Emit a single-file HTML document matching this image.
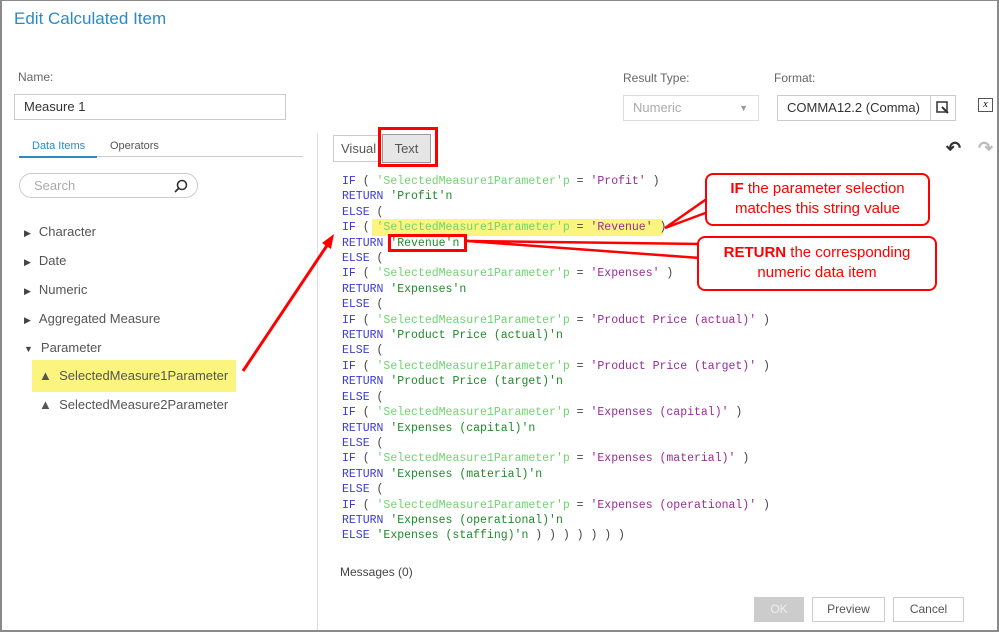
<!DOCTYPE html>
<html><head><meta charset="utf-8"><style>
*{margin:0;padding:0;box-sizing:border-box}
body{width:999px;height:632px;background:#fff;font-family:"Liberation Sans",sans-serif;position:relative;overflow:hidden}
.frame{position:absolute;left:0;top:0;width:999px;height:632px;border:2px solid #8a8a8a;border-top-width:1px}
.a{position:absolute}
.lbl{font-size:12px;color:#666}
.inp{border:1px solid #ccc;background:#fff;font-size:13px;color:#333;padding-left:9px;line-height:24px}
.tree{font-size:13px;color:#555}
.tree div{height:29px;line-height:29px}
.code{font-family:"Liberation Mono",monospace;font-size:11.5px;line-height:15.4px;white-space:pre;color:#444}
.k{color:#3b3bd6}.p{color:#6fd46f}.n{color:#1f8a2a}.s{color:#9a2a9a}
.btn{border:1px solid #ccc;font-size:12px;color:#555;text-align:center;line-height:23px;background:#fff}
.co{border:2.5px solid #f00;border-radius:8px;background:#fff;color:#f00;font-size:15px;text-align:center;line-height:20px}
</style></head><body>
<div class="frame"></div>
<div class="a" style="left:14px;top:9px;font-size:17px;color:#2a8ac6">Edit Calculated Item</div>
<div class="a lbl" style="left:18px;top:70px">Name:</div>
<div class="a inp" style="left:14px;top:94px;width:272px;height:26px">Measure 1</div>
<div class="a lbl" style="left:623px;top:71px">Result Type:</div>
<div class="a inp" style="left:623px;top:95px;width:136px;height:26px;color:#aaa;border-color:#ddd">Numeric<span style="position:absolute;right:10px;font-size:9px;color:#999">▼</span></div>
<div class="a lbl" style="left:774px;top:71px">Format:</div>
<div class="a inp" style="left:777px;top:95px;width:179px;height:26px">COMMA12.2 (Comma)</div>
<div class="a" style="left:930px;top:95px;width:26px;height:26px;border:1px solid #ccc"><svg width="24" height="24"><rect x="6" y="6" width="10" height="10" fill="none" stroke="#333" stroke-width="1.5"/><path d="M11 11 L17 17" stroke="#333" stroke-width="2"/></svg></div>
<div class="a" style="left:978px;top:98px;width:15px;height:14px;border:1px solid #555;font-size:10px;font-style:italic;font-family:'Liberation Serif',serif;text-align:center;line-height:12px">x</div>
<div class="a" style="left:19px;top:140px;width:284px;height:17px;border-bottom:1px solid #ccc"></div>
<div class="a" style="left:19px;top:156px;width:78px;height:2px;background:#2a8ac6"></div>
<div class="a" style="left:32px;top:140px;font-size:11px;color:#2a8ac6">Data Items</div>
<div class="a" style="left:110px;top:140px;font-size:11px;color:#555">Operators</div>
<div class="a" style="left:19px;top:173px;width:179px;height:25px;border:1px solid #ccc;border-radius:13px;font-size:13px;color:#aaa;padding-left:14px;line-height:23px">Search
<svg style="position:absolute;right:8px;top:4px" width="16" height="16"><circle cx="9" cy="7" r="4.5" fill="none" stroke="#333" stroke-width="1.6"/><path d="M6 10 L2 14" stroke="#333" stroke-width="1.8"/></svg></div>
<div class="a tree" style="left:24px;top:217px">
<div><span style="font-size:9px;color:#444;margin-right:8px">▶</span>Character</div>
<div><span style="font-size:9px;color:#444;margin-right:8px">▶</span>Date</div>
<div><span style="font-size:9px;color:#444;margin-right:8px">▶</span>Numeric</div>
<div><span style="font-size:9px;color:#444;margin-right:8px">▶</span>Aggregated Measure</div>
<div><span style="font-size:9px;color:#444;margin-right:8px">▼</span>Parameter</div>
</div>
<div class="a" style="left:32px;top:360px;width:204px;height:32px;background:#fbf57f"></div>
<div class="a tree" style="left:39px;top:368px">▲&nbsp; SelectedMeasure1Parameter</div>
<div class="a tree" style="left:39px;top:397px">▲&nbsp; SelectedMeasure2Parameter</div>
<div class="a" style="left:317px;top:133px;width:1px;height:497px;background:#ddd"></div>
<div class="a" style="left:333px;top:135px;width:48px;height:27px;border:1px solid #ccc;font-size:13px;color:#555;line-height:25px;padding-left:7px">Visual</div>
<div class="a" style="left:382px;top:134px;width:49px;height:29px;border:1px solid #999;background:#e6e6e6;font-size:13px;color:#555;line-height:27px;text-align:center">Text</div>
<div class="a" style="left:378px;top:127px;width:60px;height:40px;border:3px solid #f00"></div>
<div class="a" style="left:946px;top:138px;font-size:18px;font-weight:bold;color:#333">↶</div>
<div class="a" style="left:978px;top:138px;font-size:18px;font-weight:bold;color:#bbb">↷</div>
<div class="a" style="left:372px;top:219px;width:291px;height:17px;background:#fbf57f"></div>
<div class="a code" style="left:342px;top:174px"><span class="k">IF</span> ( <span class="p">'SelectedMeasure1Parameter'p</span> = <span class="s">'Profit'</span> )
<span class="k">RETURN</span> <span class="n">'Profit'n</span>
<span class="k">ELSE</span> (
<span class="k">IF</span> ( <span class="p">'SelectedMeasure1Parameter'p</span> = <span class="s">'Revenue'</span> )
<span class="k">RETURN</span> <span class="n">'Revenue'n</span>
<span class="k">ELSE</span> (
<span class="k">IF</span> ( <span class="p">'SelectedMeasure1Parameter'p</span> = <span class="s">'Expenses'</span> )
<span class="k">RETURN</span> <span class="n">'Expenses'n</span>
<span class="k">ELSE</span> (
<span class="k">IF</span> ( <span class="p">'SelectedMeasure1Parameter'p</span> = <span class="s">'Product Price (actual)'</span> )
<span class="k">RETURN</span> <span class="n">'Product Price (actual)'n</span>
<span class="k">ELSE</span> (
<span class="k">IF</span> ( <span class="p">'SelectedMeasure1Parameter'p</span> = <span class="s">'Product Price (target)'</span> )
<span class="k">RETURN</span> <span class="n">'Product Price (target)'n</span>
<span class="k">ELSE</span> (
<span class="k">IF</span> ( <span class="p">'SelectedMeasure1Parameter'p</span> = <span class="s">'Expenses (capital)'</span> )
<span class="k">RETURN</span> <span class="n">'Expenses (capital)'n</span>
<span class="k">ELSE</span> (
<span class="k">IF</span> ( <span class="p">'SelectedMeasure1Parameter'p</span> = <span class="s">'Expenses (material)'</span> )
<span class="k">RETURN</span> <span class="n">'Expenses (material)'n</span>
<span class="k">ELSE</span> (
<span class="k">IF</span> ( <span class="p">'SelectedMeasure1Parameter'p</span> = <span class="s">'Expenses (operational)'</span> )
<span class="k">RETURN</span> <span class="n">'Expenses (operational)'n</span>
<span class="k">ELSE</span> <span class="n">'Expenses (staffing)'n</span> ) ) ) ) ) ) )</div>
<div class="a" style="left:388px;top:234px;width:79px;height:18px;border:3px solid #f00"></div>
<svg class="a" style="left:0;top:0" width="999" height="632">
<path d="M243 371 L328 244" stroke="#f00" stroke-width="3" fill="none"/>
<path d="M334 234 L322 243 L331 249 Z" fill="#f00"/>
<path d="M708 198 L665 228 L708 212" stroke="#f00" stroke-width="2.5" fill="#fff"/>
<path d="M700 244 L467 241 L700 258" stroke="#f00" stroke-width="2.5" fill="#fff"/>
</svg>
<div class="a co" style="left:705px;top:173px;width:225px;height:53px;padding-top:4px"><b>IF</b> the parameter selection<br>matches this string value</div>
<div class="a co" style="left:697px;top:236px;width:240px;height:55px;padding-top:5px"><b>RETURN</b> the corresponding<br>numeric data item</div>
<div class="a" style="left:340px;top:565px;font-size:12px;color:#444">Messages (0)</div>
<div class="a btn" style="left:754px;top:597px;width:50px;height:25px;background:#ccc;border-color:#ccc;color:#eee">OK</div>
<div class="a btn" style="left:812px;top:597px;width:73px;height:25px">Preview</div>
<div class="a btn" style="left:893px;top:597px;width:71px;height:25px">Cancel</div>
</body></html>
